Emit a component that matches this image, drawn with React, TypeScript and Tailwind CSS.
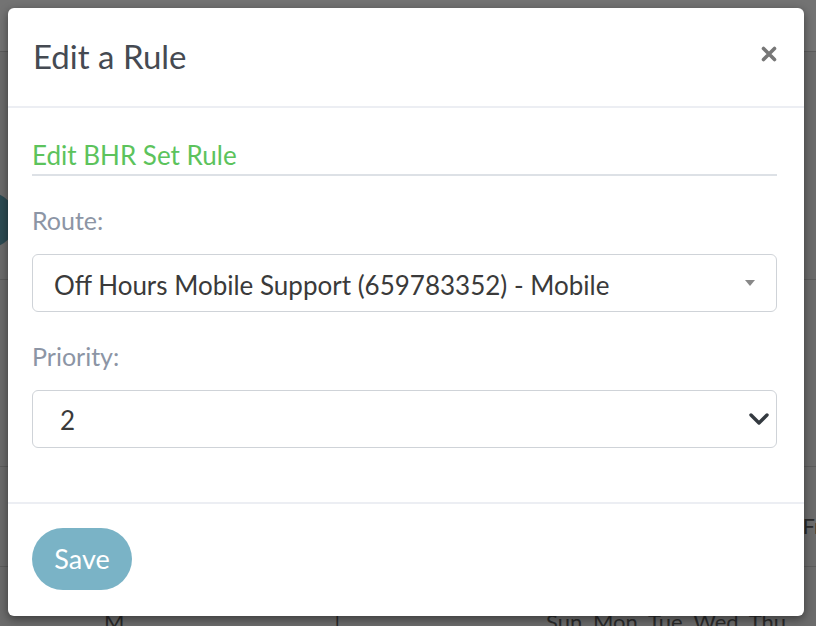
import React from "react";

const rows = [
  { h: "h-[52px]", bg: "bg-[#737373]" },
  { h: "h-[228px]", bg: "bg-[#6b6b6b]" },
  { h: "h-[187px]", bg: "bg-[#6b6b6b]" },
  { h: "h-[100px]", bg: "bg-[#6b6b6b]" },
];

function Backdrop() {
  return (
    <div className="flex flex-col">
      {rows.map((r, i) => (
        <div key={i} className={`${r.h} ${r.bg} border-b border-[#5c5c5c] relative`}>
          {i === 1 && <div className="absolute left-[-40px] top-[140px] h-[56px] w-[56px] rounded-full bg-[#2c4a52]" />}
          {i === 3 && (
            <div className="absolute right-[-6px] top-[42px] text-[22px] text-[#2a2a2a]">Fr</div>
          )}
        </div>
      ))}
      <div className="flex h-[60px] bg-[#6b6b6b] pt-[44px] text-[22px] leading-none text-[#2a2a2a]">
        <span className="ml-[104px]">M</span>
        <span className="ml-[210px]">|</span>
        <span className="ml-[206px] whitespace-nowrap">Sun. Mon. Tue. Wed. Thu.</span>
      </div>
    </div>
  );
}

function Caret() {
  return (
    <svg width="12" height="8" viewBox="0 0 12 8">
      <path d="M1 1 L11 1 L6 7 Z" fill="#888" />
    </svg>
  );
}

function Chevron() {
  return (
    <svg width="22" height="14" viewBox="0 0 22 14">
      <path d="M3 3 L11 11 L19 3" fill="none" stroke="#343a40" strokeWidth="3.4" strokeLinecap="round" strokeLinejoin="round" />
    </svg>
  );
}

export default function App() {
  return (
    <div className="relative h-[626px] w-[816px] overflow-hidden font-['Lato',sans-serif]">
      <Backdrop />
      <div className="absolute left-[8px] top-[8px] flex h-[608px] w-[796px] flex-col rounded-[6px] bg-white shadow-[0_3px_10px_rgba(0,0,0,0.45)]">
        <div className="flex h-[100px] items-center justify-between border-b-2 border-[#eceef3] pl-[25px] pr-[27px]">
          <h1 className="text-[33px] font-normal text-[#454a52]">Edit a Rule</h1>
          <button className="mt-[-6px] text-[#777]">
            <svg width="16" height="16" viewBox="0 0 16 16">
              <path d="M2.5 2.5 L13.5 13.5 M13.5 2.5 L2.5 13.5" stroke="#777" strokeWidth="3.6" strokeLinecap="round" />
            </svg>
          </button>
        </div>
        <div className="flex flex-1 flex-col pl-[24px] pr-[27px] pt-[31px]">
          <div className="border-b-2 border-[#dde1e6] pb-[3px] text-[26px] leading-[32px] text-[#5cc35c]">Edit BHR Set Rule</div>
          <label className="mt-[28px] text-[25px] leading-[32px] text-[#8c95a5]">Route:</label>
          <div className="mt-[18px] flex h-[58px] items-center justify-between rounded-[6px] border border-[#cfd3d8] pl-[21px] pr-[20px]">
            <span className="mt-[4px] text-[26px] text-[#3a3a3a]">Off Hours Mobile Support (659783352) - Mobile</span>
            <Caret />
          </div>
          <label className="mt-[28px] text-[25px] leading-[32px] text-[#8c95a5]">Priority:</label>
          <div className="mt-[18px] flex h-[58px] items-center justify-between rounded-[6px] border border-[#cfd3d8] pl-[27px] pr-[6px]">
            <span className="mt-[2px] text-[26px] text-[#3a3a3a]">2</span>
            <Chevron />
          </div>
        </div>
        <div className="flex border-t-2 border-[#eceef3] px-[24px] pb-[26px] pt-[24px]">
          <button className="h-[62px] w-[100px] rounded-full bg-[#7ab3c6] text-[27px] text-white">Save</button>
        </div>
      </div>
    </div>
  );
}
